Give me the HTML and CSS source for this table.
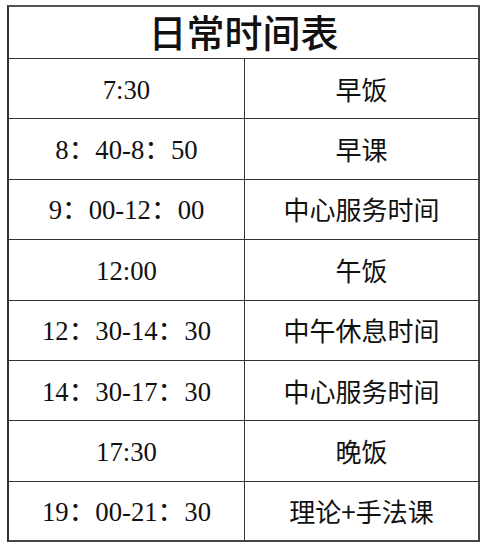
FILE: index.html
```html
<!DOCTYPE html>
<html lang="zh-CN">
<head>
<meta charset="utf-8">
<title>日常时间表</title>
<link rel="stylesheet" href="styles.css">
</head>
<body>
<div class="sheet">
  <div class="title">日常时间表</div>
  <div class="cell time">7:30</div><div class="cell item">早饭</div>
  <div class="cell time">8：40-8：50</div><div class="cell item">早课</div>
  <div class="cell time">9：00-12：00</div><div class="cell item">中心服务时间</div>
  <div class="cell time">12:00</div><div class="cell item">午饭</div>
  <div class="cell time">12：30-14：30</div><div class="cell item">中午休息时间</div>
  <div class="cell time">14：30-17：30</div><div class="cell item">中心服务时间</div>
  <div class="cell time">17:30</div><div class="cell item">晚饭</div>
  <div class="cell time">19：00-21：30</div><div class="cell item">理论+手法课</div>
</div>
</body>
</html>
```
FILE: styles.css
```css
html, body {
  margin: 0;
  background: #ffffff;
}
body {
  padding: 5px 0 0 7px;
}
.sheet {
  width: 473px;
  box-sizing: border-box;
  display: grid;
  grid-template-columns: 236px 1fr;
  grid-template-rows: 52px repeat(8, 60.4px);
  border-top: 2px solid #555;
  border-left: 2px solid #333;
  color: #111;
}
.title {
  grid-column: 1 / 3;
  display: flex;
  align-items: center;
  justify-content: center;
  font-family: "Noto Sans CJK SC", sans-serif;
  font-size: 38px;
  line-height: 44px;
  font-weight: 500;
  border-right: 2px solid #444;
  border-bottom: 1px solid #333;
  padding-bottom: 4px;
}
.cell {
  display: flex;
  align-items: center;
  justify-content: center;
  border-bottom: 1px solid #333;
  line-height: 32px;
}
.sheet > .cell:nth-last-child(-n+2) {
  border-bottom: 2px solid #444;
}
.time {
  border-right: 1px solid #333;
  font-family: "Liberation Serif", "Noto Sans CJK SC", serif;
  font-size: 26.7px;
  padding-top: 2px;
}
.item {
  border-right: 2px solid #444;
  font-family: "Noto Sans CJK SC", sans-serif;
  font-weight: 400;
  font-size: 26px;
}
```
